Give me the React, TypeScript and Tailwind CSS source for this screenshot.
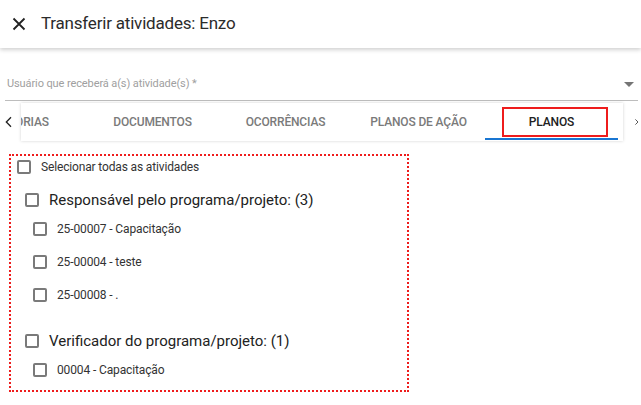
import React from "react";

const font = { fontFamily: "Roboto, 'Liberation Sans', sans-serif" };

function Box({ className = "" }: { className?: string }) {
  return <span className={`block w-[14px] h-[14px] border-2 border-[#7a7a7a] rounded-[2px] shrink-0 ${className}`} />;
}

function Chevron({ dir }: { dir: "l" | "r" }) {
  return (
    <svg width="16" height="16" viewBox="0 0 24 24" fill="none" stroke="#222" strokeWidth="2">
      {dir === "l" ? <path d="M15 5 8 12l7 7" /> : <path d="M9 5l7 7-7 7" />}
    </svg>
  );
}

const tabs = ["VISTORIAS", "DOCUMENTOS", "OCORRÊNCIAS", "PLANOS DE AÇÃO", "PLANOS"];

export default function App() {
  return (
    <div className="w-[641px] h-[405px] bg-white overflow-hidden relative" style={font}>
      <div className="h-[48px] flex items-center bg-white shadow-[0_2px_4px_rgba(0,0,0,0.18)] relative z-10">
        <svg className="ml-[12px]" width="14" height="14" viewBox="0 0 14 14" stroke="#222" strokeWidth="1.8">
          <path d="M1.5 1.5l11 11M12.5 1.5l-11 11" />
        </svg>
        <span className="ml-[15px] text-[17px] tracking-[-0.2px] text-[#2b2b2b]">Transferir atividades: Enzo</span>
      </div>

      <div className="ml-[5px] mr-[3px] mt-[27px] h-[26px] border-b border-[#bdbdbd] flex items-start justify-between">
        <span className="pl-[2px] text-[11px] tracking-[-0.1px] leading-[18px] text-[#a0a0a0]">Usuário que receberá a(s) atividade(s) *</span>
        <span className="mt-[7px] mr-[4px] w-0 h-0 border-x-[5px] border-x-transparent border-t-[5px] border-t-[#757575]" />
      </div>

      <div className="mt-[2px] h-[38px] flex items-center">
        <div className="w-[21px] flex justify-start pl-[1px]">
          <Chevron dir="l" />
        </div>
        <div className="w-[602px] h-full overflow-hidden relative shadow-[0_0_3px_rgba(0,0,0,0.18)]">
          <div className="flex h-full ml-[-68px]">
            {tabs.map((t, i) => {
              const sel = i === tabs.length - 1;
              return (
                <div key={t} className="relative w-[133px] shrink-0 h-full flex items-center justify-center">
                  <span className={`text-[12px] font-medium tracking-[-0.15px] ${sel ? "text-[#212121]" : "text-[#7a7a7a]"}`}>{t}</span>
                  {sel && (
                    <>
                      <span className="absolute left-[17px] top-[4px] w-[106px] h-[30px] border-2 border-[#ee1c1c]" />
                      <span className="absolute left-0 bottom-[1px] w-full h-[2px] bg-[#1976d2]" />
                    </>
                  )}
                </div>
              );
            })}
          </div>
        </div>
        <div className="flex-1 flex justify-start overflow-hidden pl-[9px]">
          <Chevron dir="r" />
        </div>
      </div>

      <div className="ml-[9px] mt-[13px] w-[400px] h-[238px] border-2 border-dotted border-[#ee1c1c] flex flex-col">
        <div className="h-[22px] flex items-center pl-[6px]">
          <Box />
          <span className="ml-[10px] text-[12px] tracking-[-0.15px] text-[#333]">Selecionar todas as atividades</span>
        </div>
        <div className="mt-[9px] h-[26px] flex items-center pl-[14px]">
          <Box />
          <span className="ml-[10px] text-[15px] text-[#222]">Responsável pelo programa/projeto: (3)</span>
        </div>
        {["25-00007 - Capacitação", "25-00004 - teste", "25-00008 - ."].map((t, i) => (
          <div key={t} className={`${i === 0 ? "mt-[4px]" : "mt-[9px]"} h-[24px] flex items-center pl-[22px]`}>
            <Box />
            <span className="ml-[10px] text-[12px] tracking-[-0.13px] text-[#333]">{t}</span>
          </div>
        ))}
        <div className="mt-[21px] h-[26px] flex items-center pl-[14px]">
          <Box />
          <span className="ml-[10px] text-[15px] text-[#222]">Verificador do programa/projeto: (1)</span>
        </div>
        <div className="mt-[4px] h-[24px] flex items-center pl-[22px]">
          <Box />
          <span className="ml-[10px] text-[12px] tracking-[-0.13px] text-[#333]">00004 - Capacitação</span>
        </div>
      </div>
    </div>
  );
}
